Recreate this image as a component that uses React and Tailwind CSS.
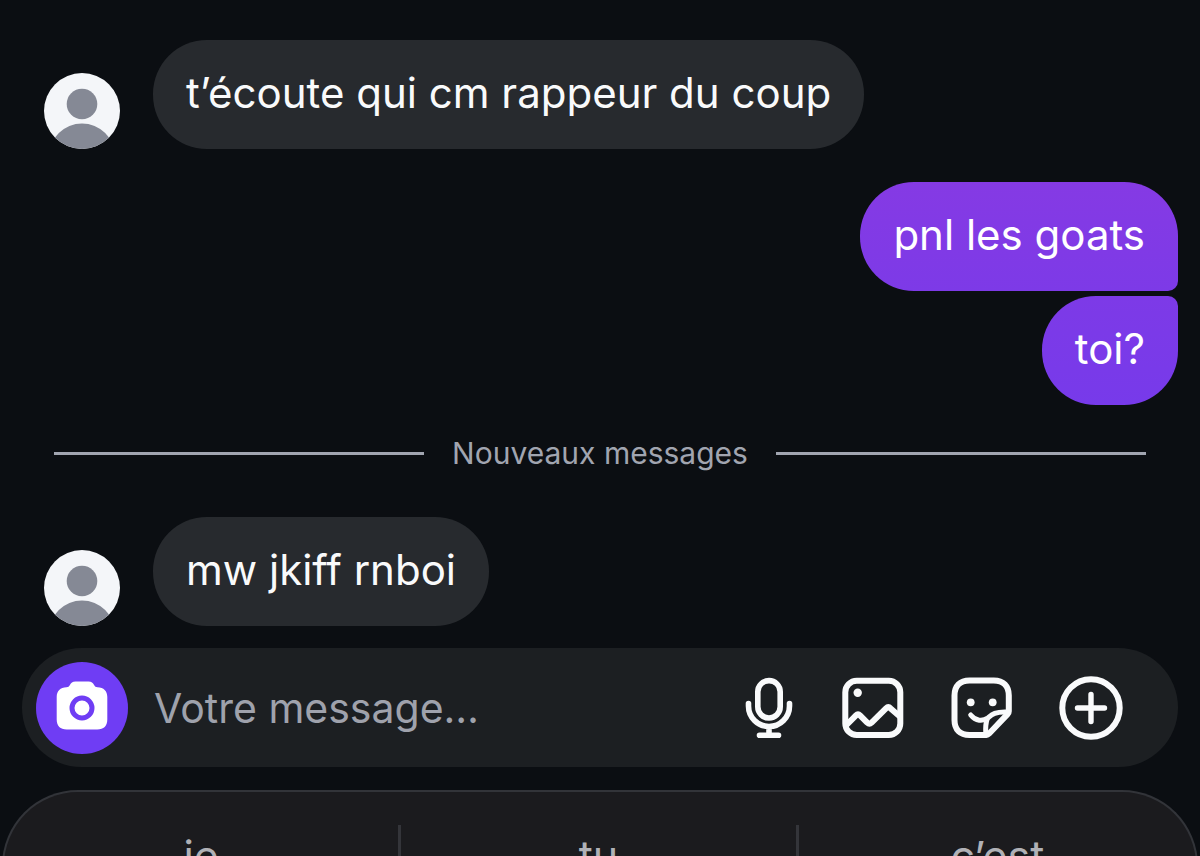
import React from "react";

function Avatar() {
  return (
    <svg className="size-[76px] shrink-0" viewBox="0 0 76 76" role="img" aria-label="Photo de profil">
      <defs>
        <clipPath id="avatar-clip">
          <circle cx="38" cy="38" r="38" />
        </clipPath>
      </defs>
      <g clipPath="url(#avatar-clip)">
        <rect width="76" height="76" fill="#f4f6f9" />
        <circle cx="38" cy="31" r="15.3" fill="#858995" />
        <circle cx="38" cy="83.3" r="32.8" fill="#858995" />
      </g>
    </svg>
  );
}

function Received({ children }) {
  return (
    <div className="flex items-end gap-[33px] pl-11">
      <Avatar />
      <p className="rounded-[54px] bg-[#272a2e] px-[33px] pt-[25px] pb-7 text-[42px] leading-14 text-[#f9fafb]">
        {children}
      </p>
    </div>
  );
}

function Sent({ children, className }) {
  return (
    <p className={`rounded-[54px] px-[33px] pt-[25px] pb-7 text-[42px] leading-14 text-white ${className}`}>
      {children}
    </p>
  );
}

function Divider({ children }) {
  return (
    <div className="mt-7 flex items-center gap-7 px-[54px]">
      <span className="h-[3px] flex-1 bg-[#a1a5b0]" />
      <span className="text-[30px] leading-10 text-[#a1a5b0]">{children}</span>
      <span className="h-[3px] flex-1 bg-[#a1a5b0]" />
    </div>
  );
}

function CameraIcon() {
  return (
    <svg className="size-[92px]" viewBox="0 0 92 92" aria-hidden="true">
      <path
        fill="#fff"
        d="M39.5 19.5h13c3.2 0 4.3 1.4 5.6 3.6.9 1.6 1.6 2.2 3.4 2.2 6.2.2 9.8 3.7 9.8 9.7v22.500c0 6.500-3.500 10-10 10H30.700c-6.500 0-10-3.500-10-10V35c0-6 3.600-9.500 9.800-9.700 1.800 0 2.500-.6 3.400-2.200 1.300-2.200 2.400-3.600 5.600-3.600z"
      />
      <circle cx="46" cy="46" r="10" fill="#fff" stroke="#6f3df4" strokeWidth="5" />
    </svg>
  );
}

function MicIcon() {
  return (
    <svg className="h-16 w-[54px]" viewBox="0 0 54 64" fill="none" stroke="#f9fafb" strokeWidth="5.6" strokeLinecap="round" aria-hidden="true">
      <rect x="15.800" y="4.600" width="22.400" height="37.400" rx="11.200" />
      <path d="M6.500 27.500v2.500a20.500 20.500 0 0 0 41 0v-2.500M27 51v8M17.500 59.200h19" />
    </svg>
  );
}

function ImageIcon() {
  return (
    <svg className="size-16" viewBox="0 0 64 64" fill="none" stroke="#f9fafb" strokeWidth="6" aria-hidden="true">
      <rect x="4.300" y="4.700" width="55" height="54.300" rx="11.500" />
      <path strokeLinejoin="round" d="M5 49.500l10-10.200q2-2 4 0l7.200 7.300q2.200 2 4.400 0L45 32.400q2.300-2.300 4.600 0L59.500 41" />
      <circle cx="16.700" cy="16.800" r="4.200" fill="#f9fafb" stroke="none" />
    </svg>
  );
}

function StickerIcon() {
  return (
    <svg className="size-16" viewBox="0 0 64 64" fill="none" stroke="#f9fafb" strokeWidth="6" strokeLinecap="round" strokeLinejoin="round" aria-hidden="true">
      <path d="M36.500 59H19.500c-9.500 0-15-5.500-15-15V19.500c0-9.500 5.500-15 15-15h24.300c9.500 0 15 5.500 15 15v15.700c0 1.300-.3 2-1.200 2.900L39.200 57.500c-.9.900-1.600 1.500-2.700 1.500z" />
      <path strokeWidth="5" d="M20.700 39c5 6.200 12 6.600 17 3 3.500-3 6.500-6.800 20.500-6" />
      <path strokeWidth="5" strokeLinecap="butt" d="M37.300 42.500c-1.500 4-2 8-1.500 16" />
      <circle cx="20.700" cy="26.300" r="3.900" fill="#f9fafb" stroke="none" />
      <circle cx="42.700" cy="26.300" r="3.900" fill="#f9fafb" stroke="none" />
    </svg>
  );
}

function PlusIcon() {
  return (
    <svg className="size-16" viewBox="0 0 64 64" fill="none" stroke="#f9fafb" strokeLinecap="round" aria-hidden="true">
      <circle cx="32" cy="32" r="28.700" strokeWidth="6" />
      <path strokeWidth="5.400" d="M32 18.500v27M18.500 32h27" />
    </svg>
  );
}

function Composer() {
  return (
    <form
      className="mx-[22px] mt-[22px] flex items-center rounded-full bg-[#1c1f22] pt-[14px] pr-[55px] pb-[13px] pl-[14px]"
      onSubmit={(event) => event.preventDefault()}
    >
      <button type="button" aria-label="Appareil photo" className="size-[92px] shrink-0 rounded-full bg-[#6f3df4]">
        <CameraIcon />
      </button>
      <input
        type="text"
        aria-label="Votre message"
        placeholder="Votre message…"
        className="ml-[26px] min-w-0 flex-1 bg-transparent text-[41px] leading-14 text-[#f9fafb] outline-none placeholder:text-[#9fa2ac] placeholder:opacity-100"
      />
      <div className="flex shrink-0 items-center gap-[45px]">
        <button type="button" aria-label="Message vocal"><MicIcon /></button>
        <button type="button" aria-label="Galerie"><ImageIcon /></button>
        <button type="button" aria-label="Autocollants"><StickerIcon /></button>
        <button type="button" aria-label="Plus"><PlusIcon /></button>
      </div>
    </form>
  );
}

function Suggestions() {
  const words = ["je", "tu", "c’est"];
  return (
    <div className="mx-[2px] mt-[23px] grid shrink-0 grid-cols-3 rounded-t-[76px] border-2 border-b-0 border-[#323439] bg-[#1b1b1e] pt-[33px] pb-6 text-[43px] leading-[62px] text-[#b0b1b6]">
      {words.map((word, index) => (
        <button
          key={word}
          type="button"
          className={index < 2 ? "border-r-3 border-[#34353a]" : ""}
        >
          {word}
        </button>
      ))}
    </div>
  );
}

export default function App() {
  return (
    <main className="flex h-screen flex-col overflow-hidden bg-[#0b0e12] pt-10 font-['Inter','Liberation_Sans',sans-serif]">
      <Received>t’écoute qui cm rappeur du coup</Received>
      <div className="mt-[33px] flex flex-col items-end gap-[5px] pr-[22px]">
        <Sent className="rounded-br-[10px] bg-linear-to-b from-[#853ae4] to-[#7d3ae7]">pnl les goats</Sent>
        <Sent className="rounded-tr-[10px] bg-linear-to-b from-[#7d3ae7] to-[#773aea]">toi?</Sent>
      </div>
      <Divider>Nouveaux messages</Divider>
      <div className="mt-11">
        <Received>mw jkiff rnboi</Received>
      </div>
      <Composer />
      <Suggestions />
    </main>
  );
}
